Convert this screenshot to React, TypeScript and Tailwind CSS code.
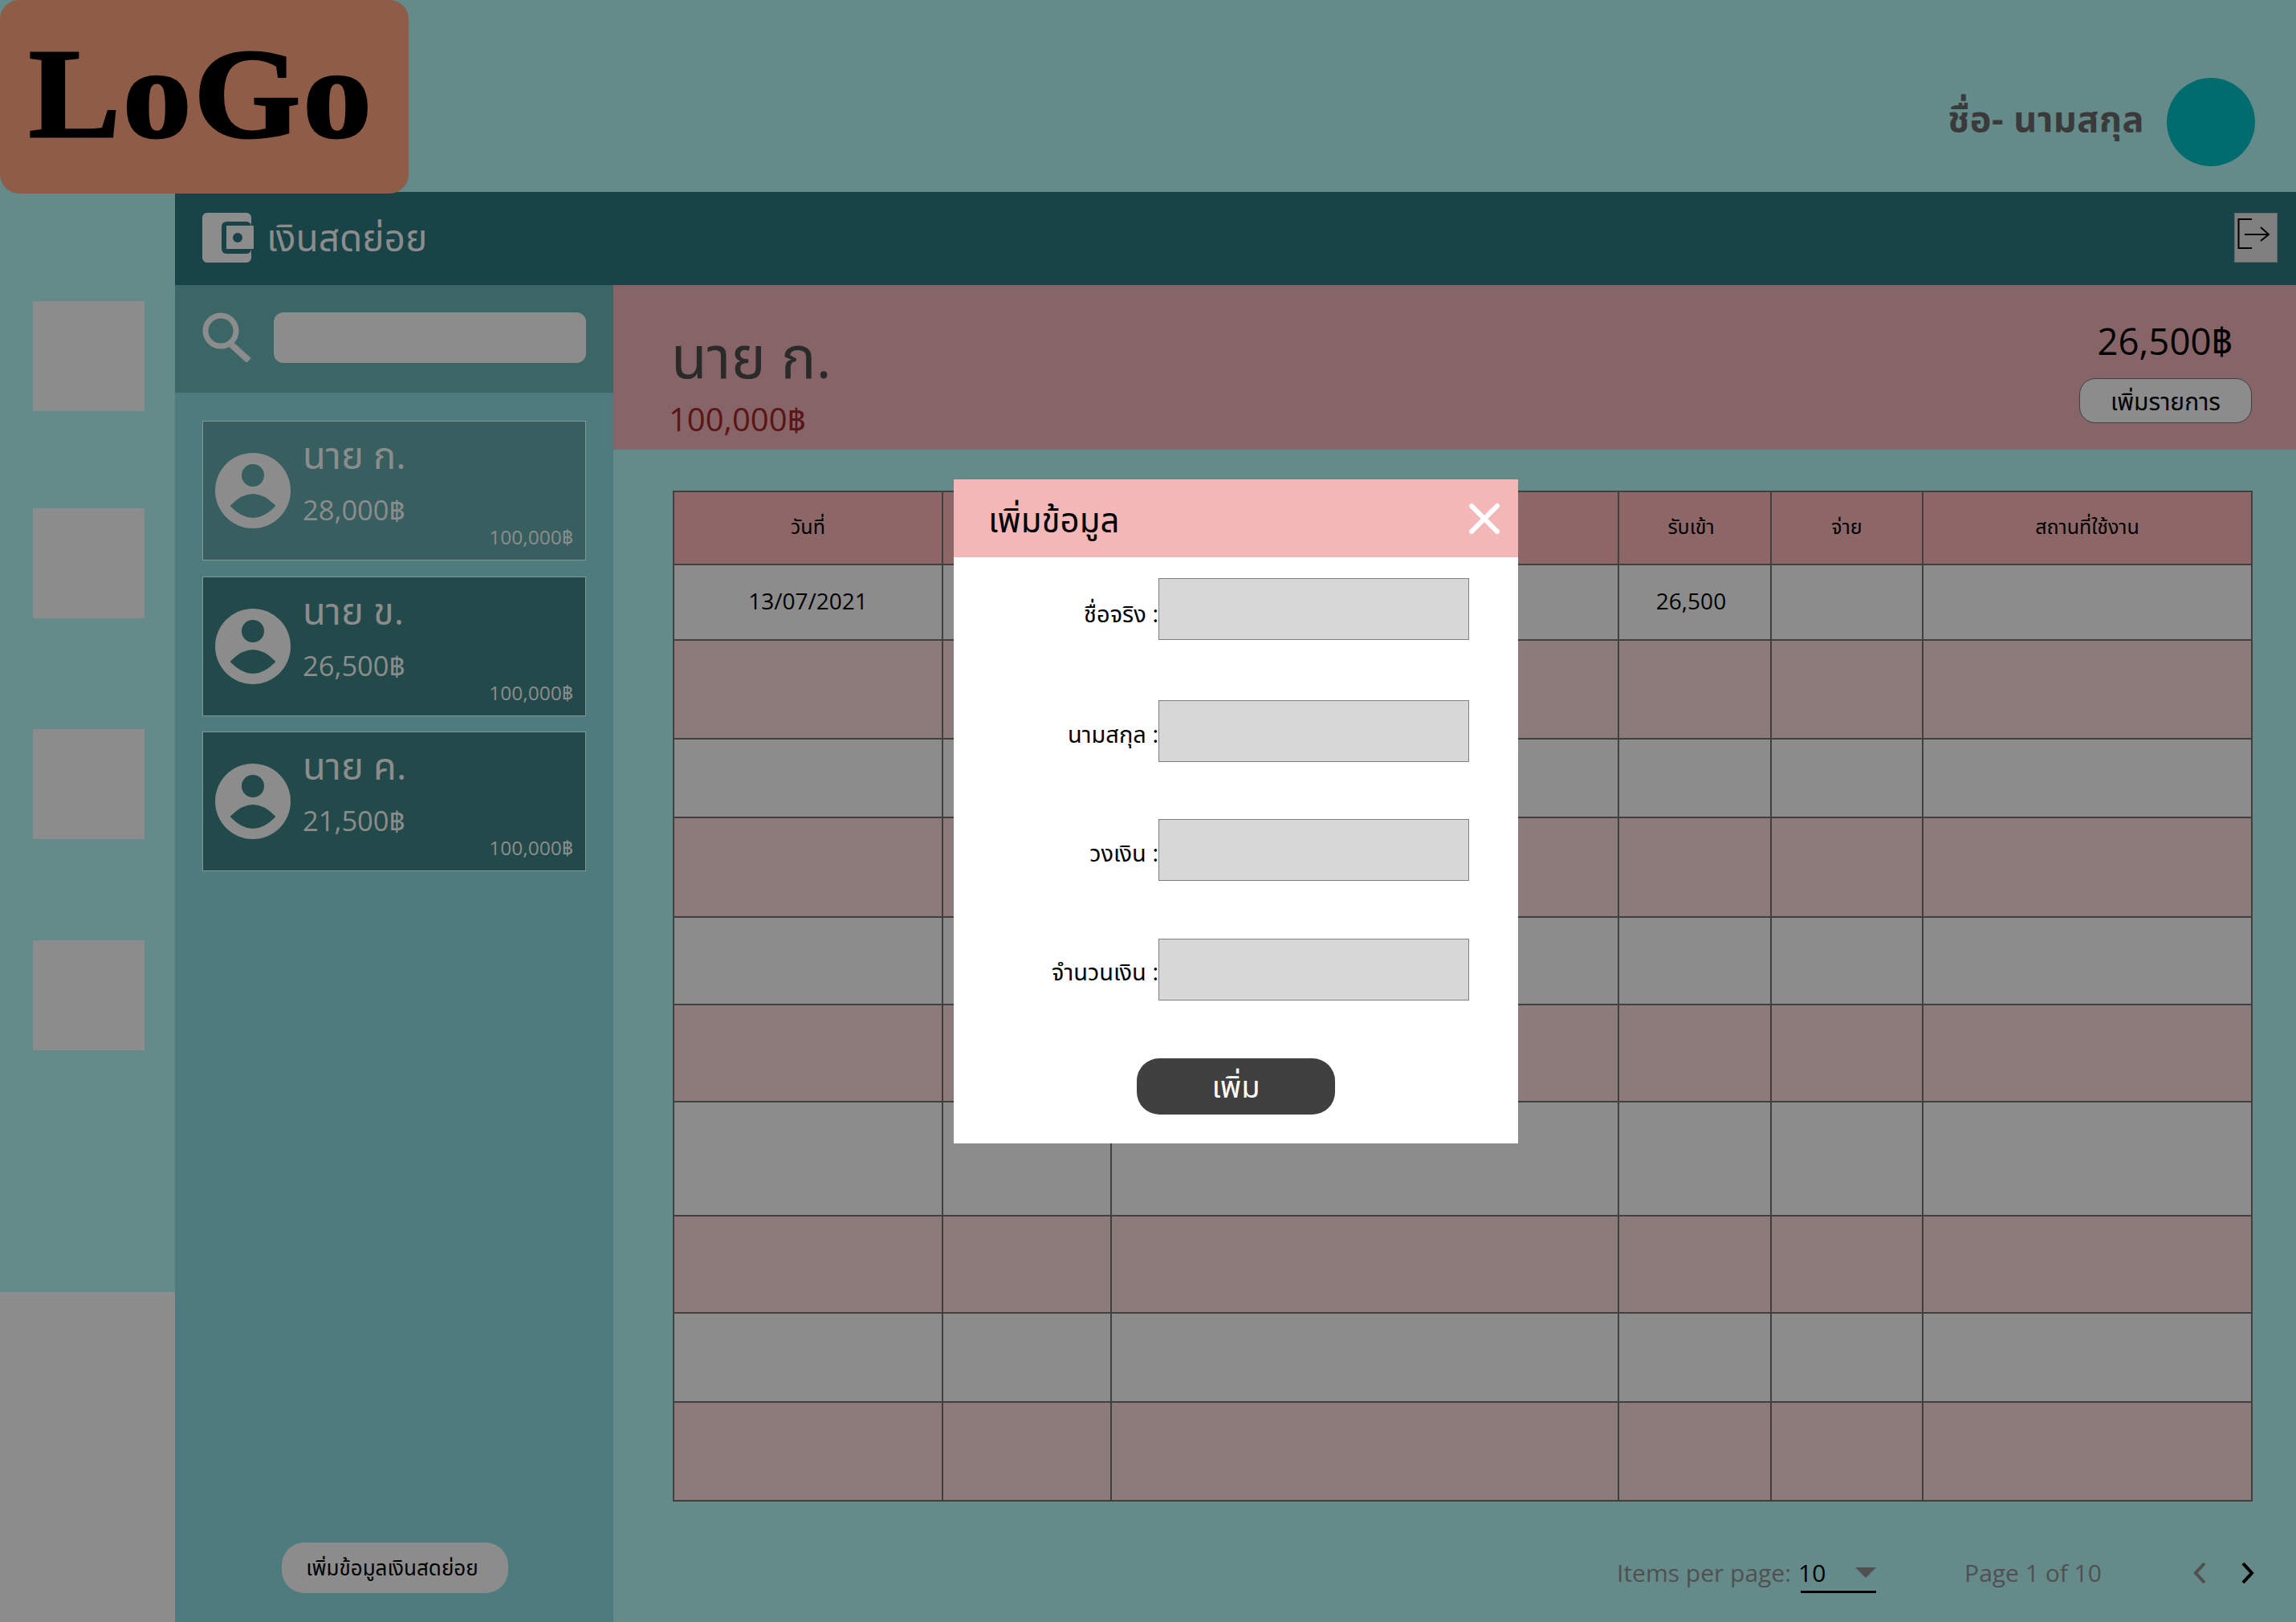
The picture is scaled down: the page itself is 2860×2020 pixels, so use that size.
const font = "font-['Open_Sans','Noto_Sans','Noto_Sans_Thai','Tahoma',sans-serif]";

function Person({ cutout }: { cutout: string }) {
  return (
    <svg width="94" height="94" viewBox="0 0 94 94" className="shrink-0">
      <circle cx="47" cy="47" r="47" fill="#8c8c8c" />
      <circle cx="47" cy="28" r="14" fill={cutout} />
      <path d="M20 66 Q47 38 74 66 Q47 94 20 66Z" fill={cutout} stroke={cutout} strokeWidth="2" strokeLinejoin="round" />
    </svg>
  );
}

function Card({ name, amount, bg, cut, className }: { name: string; amount: string; bg: string; cut: string; className: string }) {
  return (
    <div className={`h-[174px] border border-[#8a9496] flex pl-[15px] pr-[15px] relative ${bg} ${className}`}>
      <div className="flex items-center pr-[15px]">
        <Person cutout={cut} />
      </div>
      <div className="flex flex-col pt-[11px] text-[#8c8c8c]">
        <div className="text-[47px] leading-[60px]">{name}</div>
        <div className="text-[34.5px] leading-[50px] mt-[14px]">{amount}</div>
      </div>
      <div className="absolute right-[15px] bottom-[10px] text-[24.5px] leading-[36px] text-[#8c8c8c]">100,000฿</div>
    </div>
  );
}

const colClass = "grid grid-cols-[335px_210px_632px_190px_189px_408px]";
const rowH = ["h-[91px]", "h-[94px]", "h-[123px]", "h-[98px]", "h-[124px]", "h-[109px]", "h-[121px]", "h-[142px]", "h-[121px]", "h-[111px]", "h-[123px]"];

function Row({ index, cells }: { index: number; cells: string[] }) {
  const bg = index === 0 ? "bg-[#8d6767]" : index % 2 === 1 ? "bg-[#8c8c8c]" : "bg-[#8d7b7b]";
  const text = index === 0 ? "text-[25px] pb-[4px]" : "text-[28px] pb-[5px]";
  return (
    <div className={`${colClass} ${rowH[index]} ${bg}`}>
      {cells.map((c, i) => (
        <div key={i} className={`flex items-center justify-center border-b-2 border-[#404040] ${i < 5 ? "border-r-2" : ""} ${i === 3 ? "pr-[9px]" : ""} ${text} text-black`}>
          {c}
        </div>
      ))}
    </div>
  );
}

function Field({ label, className, pad }: { label: string; className: string; pad: string }) {
  return (
    <div className={`flex items-center ${className}`}>
      <div className={`w-[255px] text-right text-[29px] leading-[40px] text-black ${pad}`}>{label} :</div>
      <div className="w-[387px] h-[77px] bg-[#d7d7d7] border border-[#808080]" />
    </div>
  );
}

export default function App() {
  const empty = ["", "", "", "", "", ""];
  return (
    <div className={`w-[2860px] h-[2020px] relative overflow-hidden bg-[#648a8a] ${font} flex flex-col`}>
      <header className="h-[239px] flex items-start justify-between shrink-0 relative z-10">
        <div className="w-[509px] h-[241px] bg-[#8f5c47] rounded-[24px] pl-[36px] pt-[22px] font-['Liberation_Serif',serif] font-bold text-[158px] leading-[190px] tracking-[3px] text-black [-webkit-text-stroke:3px_#000]">
          <span className="inline-block origin-left scale-x-[1.08]">LoGo</span>
        </div>
        <div className="flex items-start pr-[51px] pt-[97px]">
          <span className="text-[45px] leading-[100px] font-bold tracking-[0.5px] text-[#3a3a3a] mr-[28px]">ชื่อ- นามสกุล</span>
          <div className="w-[110px] h-[110px] rounded-full bg-[#006c6e]" />
        </div>
      </header>

      <div className="flex flex-1 min-h-0">
        <aside className="w-[218px] shrink-0 flex flex-col">
          <div className="flex-1 flex flex-col items-start pl-[41px] pt-[136px]">
            <div className="w-[139px] h-[137px] bg-[#8c8c8c]" />
            <div className="w-[139px] h-[137px] bg-[#8c8c8c] mt-[121px]" />
            <div className="w-[139px] h-[137px] bg-[#8c8c8c] mt-[138px]" />
            <div className="w-[139px] h-[137px] bg-[#8c8c8c] mt-[126px]" />
          </div>
          <div className="h-[411px] bg-[#8c8c8c]" />
        </aside>

        <div className="flex-1 flex flex-col min-w-0">
          <div className="h-[116px] bg-[#184448] flex items-center pl-[34px] pr-[23px] shrink-0">
            <svg width="64" height="62" viewBox="0 0 64 62" className="mt-[-2px]">
              <rect x="0" y="0" width="61" height="62" rx="6" fill="#8c8c8c" />
              <rect x="24" y="11" width="37" height="40" rx="6" fill="#184448" />
              <rect x="30" y="16" width="34" height="29" fill="#8c8c8c" />
              <circle cx="44" cy="31" r="6" fill="#184448" />
            </svg>
            <span className="ml-[16px] text-[46px] leading-[60px] text-[#8c8c8c] mt-[-5px]">เงินสดย่อย</span>
            <div className="ml-auto mt-[-2px] w-[54px] h-[62px] bg-[#808080] border border-[#5c6a6c] overflow-hidden">
              <svg width="52" height="60" viewBox="0 0 52 60" fill="none" stroke="#000" strokeWidth="2" className="mt-[-5px]">
                <path d="M21 12H4.5V48H21" />
                <path d="M12 31H42M32 22L42 31L32 39" />
              </svg>
            </div>
          </div>

          <div className="flex flex-1 min-h-0">
            <div className="w-[546px] shrink-0 bg-[#4e7c7e] flex flex-col">
              <div className="h-[134px] bg-[#3c6566] flex items-start pt-[34px] pl-[34px] shrink-0">
                <svg width="62" height="62" viewBox="0 0 62 62" fill="none" stroke="#8c8c8c" strokeWidth="7">
                  <circle cx="23" cy="23" r="19" />
                  <path d="M36 40L58 60" strokeWidth="8" />
                </svg>
                <div className="ml-[27px] w-[389px] h-[63px] rounded-[12px] bg-[#8c8c8c]" />
              </div>
              <div className="flex-1 flex flex-col px-[34px] pt-[35px]">
                <Card name="นาย ก." amount="28,000฿" bg="bg-[#385f60]" cut="#385f60" className="" />
                <Card name="นาย ข." amount="26,500฿" bg="bg-[#234a4a]" cut="#234a4a" className="mt-[20px]" />
                <Card name="นาย ค." amount="21,500฿" bg="bg-[#234a4a]" cut="#234a4a" className="mt-[19px]" />
                <div className="mt-auto mb-[36px] self-center ml-[1px] w-[282px] h-[63px] rounded-[28px] bg-[#8c8c8c] flex items-center justify-center pr-[6px] text-[26px] text-black">เพิ่มข้อมูลเงินสดย่อย</div>
              </div>
            </div>

            <main className="flex-1 flex flex-col min-w-0">
              <div className="h-[205px] bg-[#866467] flex justify-between pl-[72px] pr-[55px] shrink-0">
                <div className="flex flex-col pt-[43px]">
                  <div className="text-[73px] leading-[90px] text-[#2a2a2a]">นาย ก.</div>
                  <div className="text-[40px] leading-[56px] ml-[-3px] mt-[6px] text-[#5a1515]">100,000฿</div>
                </div>
                <div className="flex flex-col items-end">
                  <div className="text-[45.5px] leading-[66px] text-black mt-[36px] mr-[24px]">26,500฿</div>
                  <div className="mt-[14px] w-[215px] h-[56px] rounded-[20px] bg-[#8c8c8c] border border-[#404040] flex items-center justify-center text-[30px] text-black">เพิ่มรายการ</div>
                </div>
              </div>

              <div className="pl-[74px] pr-[54px] pt-[51px]">
                <div className="border-t-2 border-l-2 border-r-2 border-[#404040]">
                  <Row index={0} cells={["วันที่", "", "", "รับเข้า", "จ่าย", "สถานที่ใช้งาน"]} />
                  <Row index={1} cells={["13/07/2021", "", "", "26,500", "", ""]} />
                  {[2, 3, 4, 5, 6, 7, 8, 9, 10].map((i) => (
                    <Row key={i} index={i} cells={empty} />
                  ))}
                </div>
              </div>

              <div className="flex-1 flex items-start pt-[64px] pl-[1250px] text-[#505050] text-[30px] leading-[50px]">
                <span>Items per page:</span>
                <div className="ml-[12px] w-[94px] h-[50px] border-b-[3px] border-black relative text-black">
                  <span className="ml-[-3px]">10</span>
                  <svg width="26" height="13" viewBox="0 0 26 13" className="absolute right-0 top-[18px]">
                    <polygon points="0,0 26,0 13,13" fill="#505050" />
                  </svg>
                </div>
                <span className="ml-[110px]">Page 1 of 10</span>
                <svg width="16" height="26" viewBox="0 0 16 26" fill="none" stroke="#505050" strokeWidth="4" className="ml-[114px] mt-[12px]">
                  <path d="M14 1L3 13L14 25" />
                </svg>
                <svg width="16" height="26" viewBox="0 0 16 26" fill="none" stroke="#000" strokeWidth="4" className="ml-[44px] mt-[12px]">
                  <path d="M2 1L13 13L2 25" />
                </svg>
              </div>
            </main>
          </div>
        </div>
      </div>

      <div className="absolute left-[1188px] top-[597px] w-[703px] h-[827px] bg-white flex flex-col z-20">
        <div className="h-[97px] bg-[#f3b7b7] flex items-center justify-between pl-[43px] pr-[23px] shrink-0">
          <span className="text-[42px] leading-[60px] text-black pt-[2px]">เพิ่มข้อมูล</span>
          <svg width="38" height="38" viewBox="0 0 38 38" stroke="#fff" strokeWidth="6">
            <path d="M1 1L37 37M37 1L1 37" />
          </svg>
        </div>
        <div className="flex flex-col pt-[26px]">
          <Field label="ชื่อจริง" className="" pad="pt-[10px]" />
          <Field label="นามสกุล" className="mt-[75px]" pad="pt-[6px]" />
          <Field label="วงเงิน" className="mt-[71px]" pad="pt-[6px]" />
          <Field label="จำนวนเงิน" className="mt-[72px]" pad="pt-[5px]" />
        </div>
        <div className="mt-[72px] ml-[228px] w-[247px] h-[70px] rounded-[28px] bg-[#404040] flex items-center justify-center pb-[2px] text-white text-[38px]">เพิ่ม</div>
      </div>
    </div>
  );
}
